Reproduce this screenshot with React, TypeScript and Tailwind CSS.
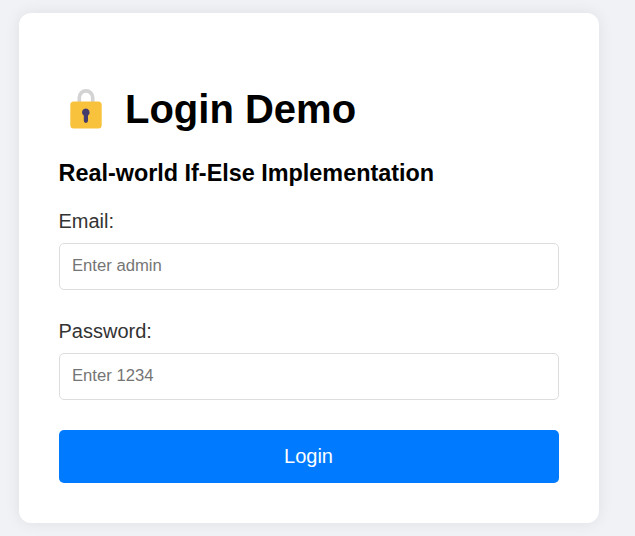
function LockIcon() {
  return (
    <svg className="h-[50px] w-[50px] shrink-0" viewBox="0 0 50 50" fill="none" aria-hidden="true">
      <path d="M20.3 20V13.6a6.7 6.7 0 0 1 13.4 0V20" stroke="#d3d3d3" strokeWidth="3.6" />
      <rect x="11.3" y="17.6" width="31.4" height="27" rx="3.5" fill="#f9c23c" />
      <path
        d="M30.6 28.4a3.8 3.8 0 1 0-5.8 3.2V36.8a2.1 2.1 0 0 0 4.2 0V31.6a3.8 3.8 0 0 0 1.6-3.2Z"
        fill="#433b6b"
      />
    </svg>
  );
}

interface FieldProps {
  id: string;
  label: string;
  placeholder: string;
  type: string;
}

function Field({ id, label, placeholder, type }: FieldProps) {
  return (
    <div className="mb-[30px]">
      <label htmlFor={id} className="-ml-[0.5px] mb-[10px] block text-[20px] leading-[23px] text-[#333]">
        {label}
      </label>
      <input
        id={id}
        type={type}
        placeholder={placeholder}
        className="block h-[47px] w-full rounded-[5px] border border-[#ddd] bg-white px-3 pb-[2px] text-[16.67px] placeholder:text-[#757575]"
      />
    </div>
  );
}

export default function App() {
  return (
    <div className="h-screen overflow-hidden bg-[#f0f2f5] pt-[13px] pl-[19px] font-['Liberation_Sans',Arial,sans-serif]">
      <main className="h-[510px] w-[580px] rounded-[12px] bg-white px-10 pt-[71px] shadow-[0_0_16px_rgba(0,0,0,0.08)]">
        <h1 className="flex h-[50px] items-center text-[40px] leading-[46px] font-bold text-black">
          <LockIcon />
          <span className="ml-4">Login Demo</span>
        </h1>
        <h3 className="-ml-[0.5px] mt-[26px] mb-[23px] text-[23.4px] leading-[27px] font-bold text-black">
          Real-world If-Else Implementation
        </h3>
        <form>
          <Field id="email" label="Email:" placeholder="Enter admin" type="text" />
          <Field id="password" label="Password:" placeholder="Enter 1234" type="password" />
          <button
            type="button"
            className="block h-[53px] w-full rounded-[5px] bg-[#007bff] pr-px pb-[2px] text-center text-[20px] text-white"
          >
            Login
          </button>
        </form>
      </main>
    </div>
  );
}
